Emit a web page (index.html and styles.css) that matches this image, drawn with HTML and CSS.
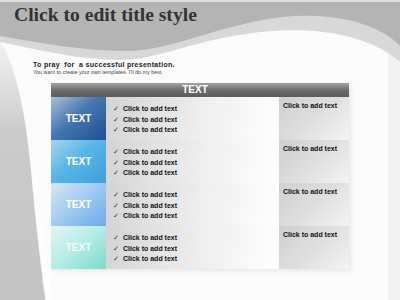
FILE: index.html
```html
<!DOCTYPE html>
<html lang="en">
<head>
  <meta charset="UTF-8" />
  <title>Click to edit title style</title>
  <link rel="stylesheet" href="styles.css">
</head>
<body>
  <div class="slide">
    <svg class="backdrop" width="400" height="300" viewBox="0 0 400 300">
      <defs>
        <linearGradient id="side" x1="0" y1="0" x2="0" y2="1">
          <stop offset="0" stop-color="#f4f4f4" />
          <stop offset="0.35" stop-color="#cbcbcb" />
          <stop offset="1" stop-color="#c4c4c4" />
        </linearGradient>
        <linearGradient id="sideEdge" x1="0" y1="0" x2="1" y2="0">
          <stop offset="0" stop-color="#ffffff" stop-opacity="0" />
          <stop offset="1" stop-color="#ffffff" stop-opacity="0.9" />
        </linearGradient>
      </defs>
      <rect width="400" height="300" fill="#fbfbfb" />
      <rect x="388" y="0" width="12" height="300" fill="#f1f1f1" />
      <path d="M0,40 C18,70 26,120 31,170 C35,215 40,260 46,300 L0,300 Z" fill="url(#side)" />
      <path d="M30,160 C34,210 39,255 45,300 L52,300 C46,255 40,210 36,160 Z" fill="url(#sideEdge)" />
      <path d="M0,0 H400 V62 C370,36 320,26 260,32 C190,40 160,60 120,60 C80,60 40,50 0,42 Z" fill="#d8d8d8" />
      <path d="M0,0 H400 V46 C378,22 330,12 282,17 C222,24 172,50 130,51 C82,51 40,43 0,36 Z" fill="#b4b4b4" />
      <rect width="400" height="2" fill="#dedede" />
    </svg>

    <h1 class="title">Click to edit title style</h1>

    <div class="intro">
      <p class="intro-lead">To pray&nbsp; for&nbsp; a successful presentation.</p>
      <p class="intro-note">You want to create your own templates. I'll do my best.</p>
    </div>

    <div class="table">
      <div class="table-head">TEXT</div>

      <div class="row">
        <div class="label label-1">TEXT</div>
        <ul class="checks">
          <li>Click to add text</li>
          <li>Click to add text</li>
          <li>Click to add text</li>
        </ul>
        <div class="note">Click to add text</div>
      </div>

      <div class="row">
        <div class="label label-2">TEXT</div>
        <ul class="checks">
          <li>Click to add text</li>
          <li>Click to add text</li>
          <li>Click to add text</li>
        </ul>
        <div class="note">Click to add text</div>
      </div>

      <div class="row">
        <div class="label label-3">TEXT</div>
        <ul class="checks">
          <li>Click to add text</li>
          <li>Click to add text</li>
          <li>Click to add text</li>
        </ul>
        <div class="note">Click to add text</div>
      </div>

      <div class="row">
        <div class="label label-4">TEXT</div>
        <ul class="checks">
          <li>Click to add text</li>
          <li>Click to add text</li>
          <li>Click to add text</li>
        </ul>
        <div class="note">Click to add text</div>
      </div>
    </div>
  </div>
</body>
</html>
```

FILE: styles.css
```css
body {
  margin: 0;
  padding: 0;
  font-family: 'Liberation Sans', Arial, sans-serif;
  background-color: #fbfbfb;
}

.slide {
  position: relative;
  width: 400px;
  height: 300px;
  overflow: hidden;
}

.backdrop {
  position: absolute;
  top: 0;
  left: 0;
  z-index: 0;
}

.title,
.intro,
.table {
  position: relative;
  z-index: 1;
}

.title {
  margin: 0;
  padding: 4px 0 0 14px;
  font-family: 'Liberation Serif', 'Times New Roman', serif;
  font-size: 19.6px;
  font-weight: bold;
  line-height: 22px;
  color: #333;
}

.intro {
  margin: 35px 0 0 33px;
}

.intro p {
  margin: 0;
}

.intro-lead {
  font-size: 7px;
  font-weight: bold;
  line-height: 8px;
  letter-spacing: 0.3px;
  color: #222;
}

.intro-note {
  font-size: 5.4px;
  line-height: 7px;
  color: #444;
}

.table {
  width: 298px;
  margin: 7px 0 0 51px;
  box-shadow: 2px 2px 4px rgba(0, 0, 0, 0.08);
}

.table-head {
  height: 14px;
  padding-right: 10px;
  background: linear-gradient(#a4a4a4, #6a6a6a 55%, #5c5c5c);
  color: #fff;
  font-size: 10px;
  font-weight: bold;
  line-height: 14px;
  text-align: center;
}

.row {
  display: grid;
  grid-template-columns: 55px 173px 70px;
  height: 43px;
}

.label {
  display: flex;
  align-items: center;
  justify-content: center;
  color: #fff;
  font-size: 10px;
  font-weight: bold;
}

.label-1 {
  background: linear-gradient(140deg, #a9c0da 0%, #4677b2 45%, #1f4f96 100%);
}

.label-2 {
  background: linear-gradient(140deg, #a8d4ea 0%, #58b6e8 45%, #3d9ddc 100%);
}

.label-3 {
  background: linear-gradient(140deg, #d6e6f2 0%, #a4cdf2 45%, #6aaae8 100%);
}

.label-4 {
  background: linear-gradient(140deg, #e4f4f2 0%, #b4ece4 50%, #7ed8cc 100%);
  color: #eefcfa;
}

.checks {
  display: flex;
  flex-direction: column;
  justify-content: center;
  margin: 0;
  padding: 3px 0 0 7px;
  list-style: none;
  background: linear-gradient(100deg, #d4d4d4, #eeeeee 55%, #ffffff);
}

.checks li {
  font-size: 7px;
  font-weight: bold;
  line-height: 10.5px;
  color: #111;
}

.checks li::before {
  content: "\2713";
  display: inline-block;
  width: 10px;
  font-weight: normal;
  color: #333;
}

.note {
  padding: 4px 0 0 4px;
  background: linear-gradient(135deg, #cfcfcf, #dedede 50%, #f4f4f4);
  font-size: 7px;
  font-weight: bold;
  line-height: 9px;
  color: #111;
}
```
